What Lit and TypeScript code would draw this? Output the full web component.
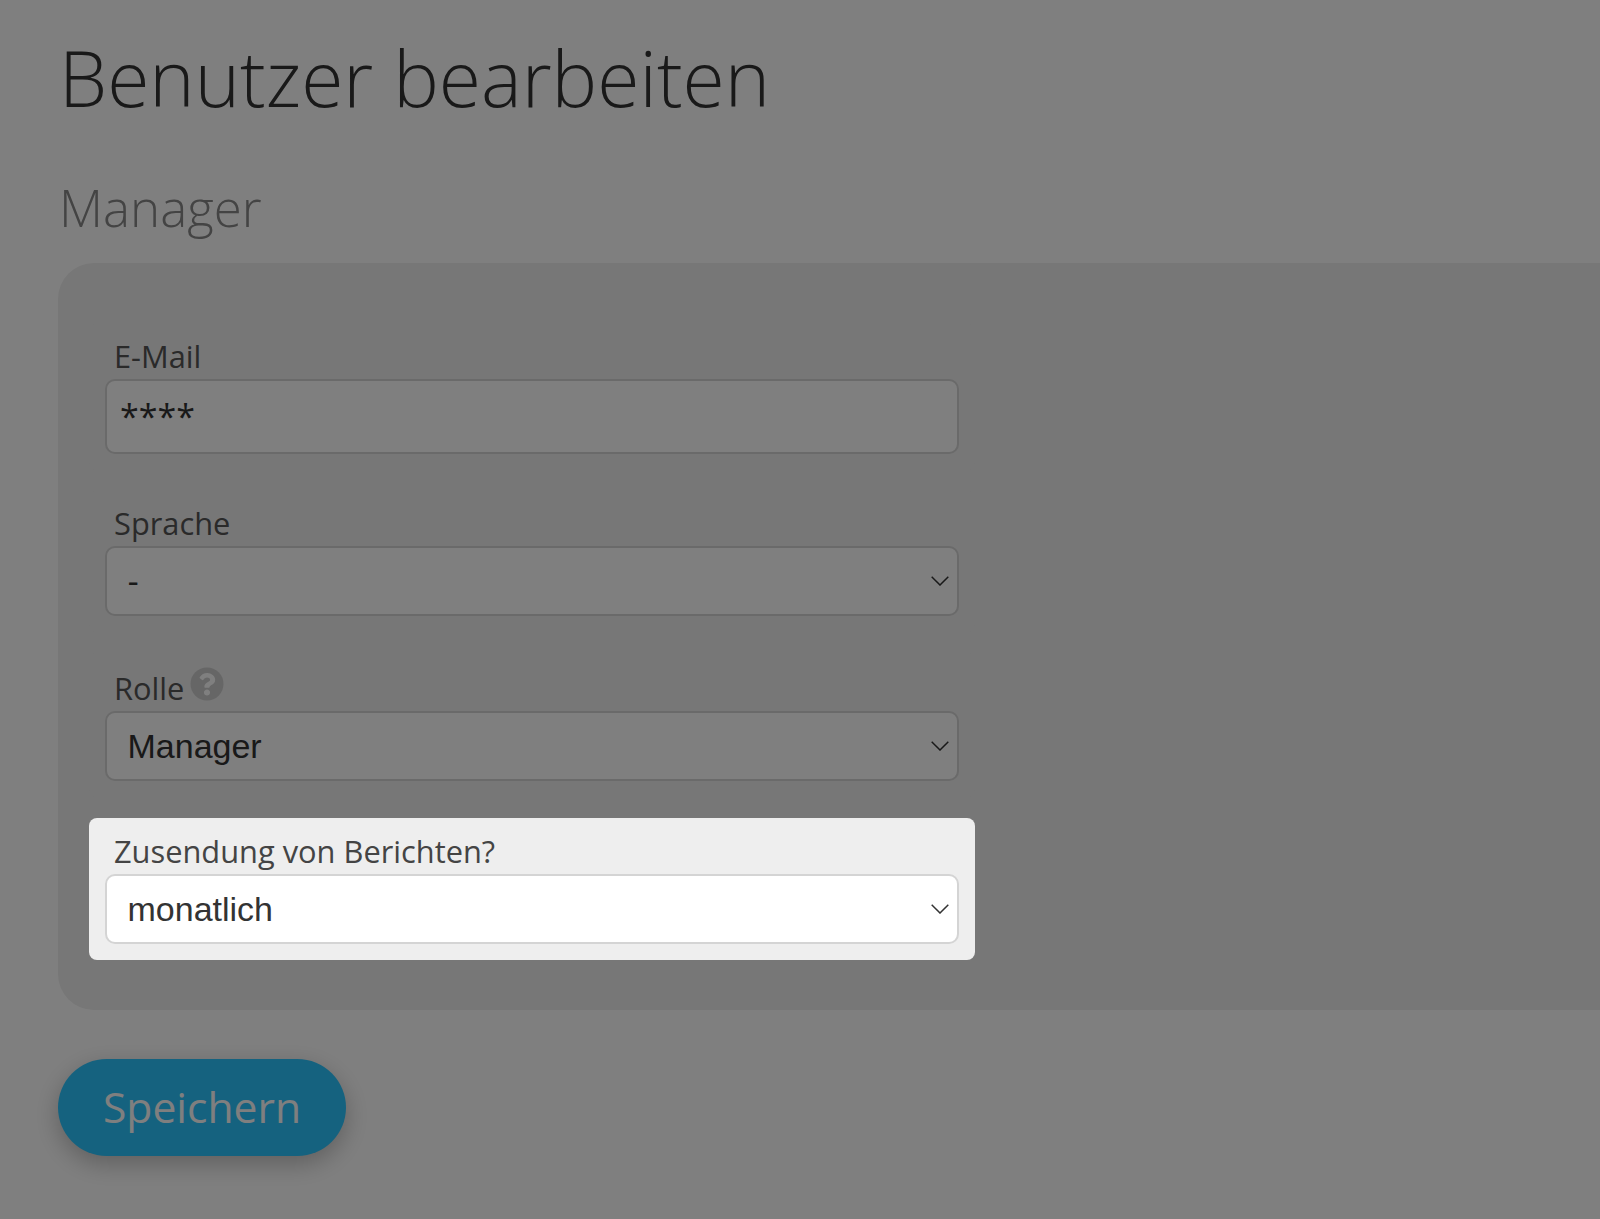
import { LitElement, html, css } from "lit";
import { customElement } from "lit/decorators.js";

const chevron = html`<svg class="chev" viewBox="0 0 18 10" aria-hidden="true"><path d="M.7.7L9 9 17.3.7" fill="none" stroke="#333" stroke-width="1.5"/></svg>`;

@customElement("app-root")
export class AppRoot extends LitElement {
  static styles = css`
    :host { display: block; height: 1219px; background: #fff; font-family: "Open Sans", sans-serif; overflow: hidden; }
    .veil { position: fixed; inset: 0; background: rgba(0,0,0,.5); z-index: 1; }
    .page { padding: 23px 0 0 59px; }
    h1 { margin: 0; font-size: 76.8px; line-height: 110px; font-weight: 300; color: #333; }
    h2 { margin: 44px 0 0; font-size: 51px; line-height: 60px; font-weight: 300; color: #888; }
    .card { margin: 26px 0 0 -1px; background: #eee; border-radius: 36px 0 0 36px; padding: 40px 0 32px 31px; height: 747px; box-sizing: border-box; }
    .group { width: 886px; box-sizing: border-box; padding: 0 16px 16px; margin-top: 21px; background: #eee; border-radius: 8px; }
    .group.hl { position: relative; z-index: 2; }
    label { display: flex; align-items: flex-end; height: 55px; padding: 0 0 2px 9px; box-sizing: border-box; font-size: 30.8px; line-height: 41px; color: #555; gap: 6px; }
    .hl label { color: #444; height: 56px; }
    .field { position: relative; display: block; width: 854px; }
    input, select { display: block; width: 100%; box-sizing: border-box; background: #fff; border: 2px solid #d4d4d4; border-radius: 10px; outline: none; color: #333; margin: 0; }
    input { height: 75px; padding: 0 13px 1px; font: 400 34px "Open Sans", sans-serif; }
    select { height: 70px; padding: 0 40px 0 20.5px; font: 400 34px "Liberation Sans", Arial, sans-serif; appearance: none; -webkit-appearance: none; }
    .chev { position: absolute; right: 10px; top: 50%; width: 18px; height: 10px; margin-top: -5px; pointer-events: none; }
    .q { width: 34px; height: 34px; margin-bottom: 8px; flex: none; }
    .rolle { height: 58px; }
    button { display: block; margin: 49px 0 0 -1px; width: 288px; height: 97px; border: 0; border-radius: 49px; background: #2ac4fe; color: #fff; font: 400 42.6px "Open Sans", sans-serif; box-shadow: 0 8px 24px rgba(0,0,0,.25); padding: 0 0 3px; }
  `;

  render() {
    return html`
      <div class="page">
        <h1>Benutzer bearbeiten</h1>
        <h2>Manager</h2>
        <div class="card">
          <div class="group">
            <label>E-Mail</label>
            <span class="field"><input value="****" /></span>
          </div>
          <div class="group">
            <label>Sprache</label>
            <span class="field"><select><option>-</option></select>${chevron}</span>
          </div>
          <div class="group">
            <label class="rolle">Rolle
              <svg class="q" viewBox="0 0 512 512" aria-hidden="true"><circle cx="256" cy="256" r="248" fill="#ccc"/><path fill="#fff" d="M262.655 90c-54.497 0-89.255 22.957-116.549 63.758-3.536 5.286-2.353 12.415 2.715 16.258l34.699 26.31c5.205 3.947 12.621 3.008 16.665-2.122 17.864-22.658 30.113-35.797 57.303-35.797 20.429 0 45.698 13.148 45.698 32.958 0 14.976-12.363 22.667-32.534 33.976C247.128 238.528 216 254.941 216 296v4c0 6.627 5.373 12 12 12h56c6.627 0 12-5.373 12-12v-1.333c0-28.462 83.186-29.647 83.186-106.667 0-58.002-60.165-102-116.531-102zM256 338c-25.365 0-46 20.635-46 46 0 25.364 20.635 46 46 46s46-20.636 46-46c0-25.365-20.635-46-46-46z"/></svg>
            </label>
            <span class="field"><select><option>Manager</option></select>${chevron}</span>
          </div>
          <div class="group hl">
            <label>Zusendung von Berichten?</label>
            <span class="field"><select><option>monatlich</option></select>${chevron}</span>
          </div>
        </div>
        <button>Speichern</button>
      </div>
      <div class="veil"></div>
    `;
  }
}
